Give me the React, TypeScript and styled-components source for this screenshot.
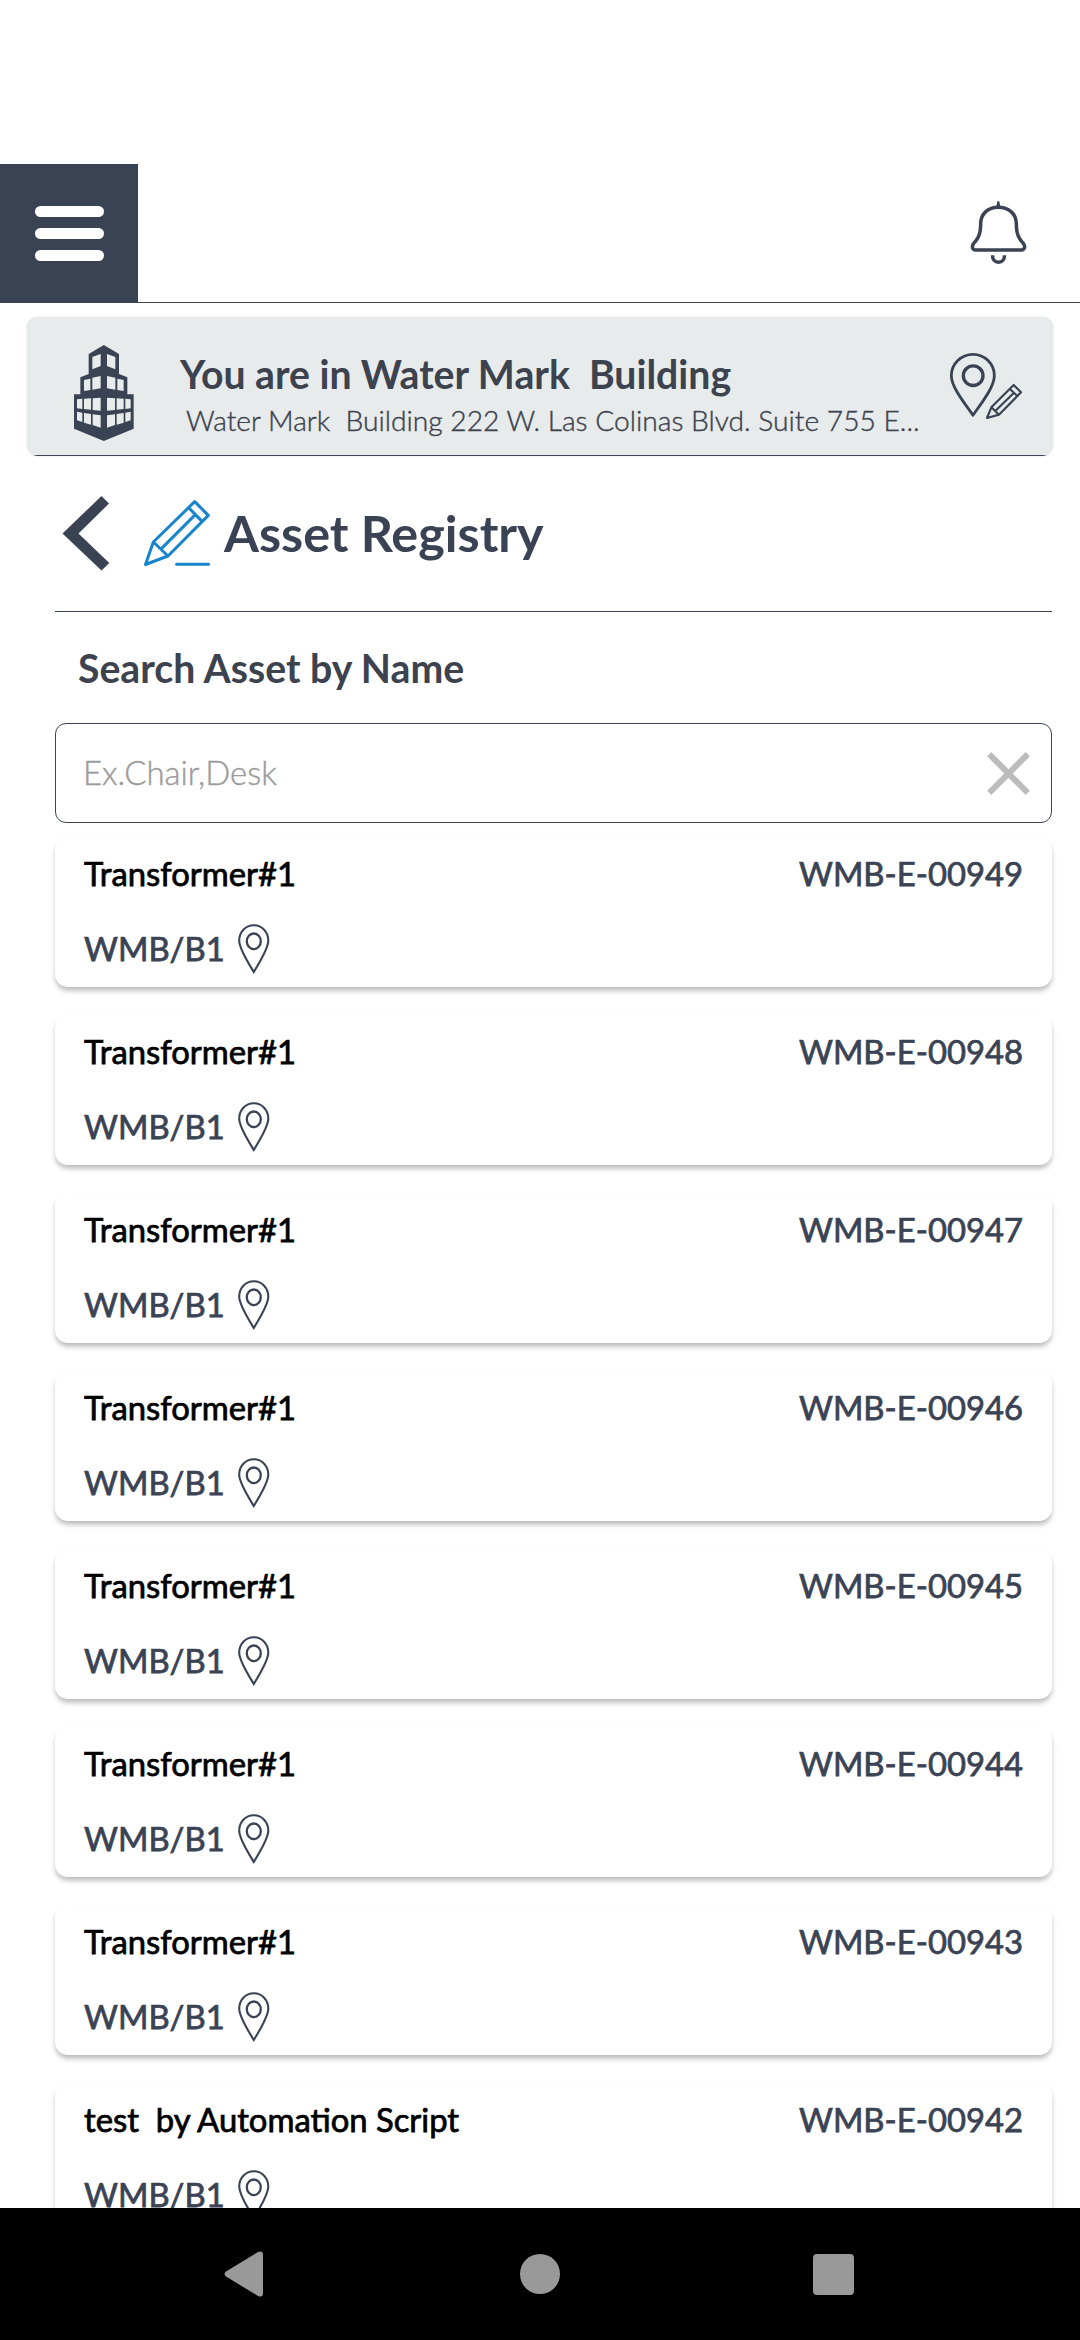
import React from "react";
import styled, { createGlobalStyle } from "styled-components";

const ink = "#3a4354";
const charcoal = "#3c424e";

const GlobalStyle = createGlobalStyle`
  *, *::before, *::after { box-sizing: border-box; }
  body { margin: 0; background: #fff; font-family: Lato, "Open Sans", sans-serif; }
  button { border: 0; padding: 0; background: none; font: inherit; color: inherit; display: flex; }
  svg { display: block; flex: none; overflow: visible; }
`;

const Screen = styled.div`
  width: 1080px;
  height: 2340px;
  display: flex;
  flex-direction: column;
  overflow: hidden;
  background: #fff;
`;

const TopBar = styled.header`
  flex: none;
  margin-top: 164px;
  height: 139px;
  border-bottom: 1px solid ${ink};
  display: flex;
  align-items: stretch;
  justify-content: space-between;
`;

const MenuButton = styled.button`
  width: 138px;
  flex-direction: column;
  align-items: center;
  justify-content: center;
  gap: 11px;
  background: ${ink};
`;

const MenuBar = styled.span`
  width: 69px;
  height: 11px;
  border-radius: 5.5px;
  background: #fff;
`;

const BellButton = styled.button`
  padding: 36px 53px 0 0;
`;

const Banner = styled.section`
  flex: none;
  margin: 14px 27px 0;
  height: 139px;
  padding-left: 46px;
  display: flex;
  border-radius: 11px;
  background: linear-gradient(${ink}, ${ink}) bottom / 100% 1px no-repeat #e7ebeb;
  box-shadow: 0 0 2px rgba(0, 0, 0, 0.16);
`;

const BannerIcon = styled.div<{ $top: number }>`
  flex: none;
  padding-top: ${(p) => p.$top}px;
`;

const BannerText = styled.div`
  flex: none;
  width: 816px;
  padding: 34px 0 0 46px;
  white-space: pre;
  color: ${charcoal};
`;

const BannerTitle = styled.h1`
  margin: 0;
  font-size: 39.2px;
  line-height: 46px;
  font-weight: 700;
`;

const BannerAddress = styled.p`
  margin: 6px 0 0 6px;
  font-size: 28.2px;
  line-height: 34px;
  font-weight: 300;
  -webkit-text-stroke: 0.4px currentColor;
`;

const Main = styled.main`
  flex: 1;
  min-height: 0;
  padding: 0 28px 0 55px;
  display: flex;
  flex-direction: column;
  overflow: hidden;
`;

const PageHeader = styled.div`
  flex: none;
  height: 156px;
  padding: 0 0 0 7px;
  border-bottom: 1px solid ${ink};
  display: flex;
  align-items: flex-start;
`;

const BackButton = styled.button`
  padding-top: 40px;
  width: 82px;
`;

const PencilSlot = styled.div`
  padding-top: 44px;
  width: 80px;
`;

const PageTitle = styled.h2`
  margin: 0;
  padding-top: 47px;
  font-size: 50.3px;
  line-height: 60px;
  font-weight: 700;
  color: ${ink};
`;

const SearchLabel = styled.label`
  flex: none;
  margin: 33px 0 0 23px;
  height: 78px;
  font-size: 39.2px;
  line-height: 46px;
  font-weight: 700;
  color: ${charcoal};
`;

const SearchBox = styled.div`
  flex: none;
  height: 100px;
  padding: 0 21px 0 27px;
  display: flex;
  align-items: center;
  justify-content: space-between;
  border: 1px solid ${ink};
  border-radius: 11px;
`;

const SearchInput = styled.input`
  flex: 1;
  min-width: 0;
  padding: 0;
  border: 0;
  outline: 0;
  background: none;
  font: 300 32.9px/40px Lato, sans-serif;
  &::placeholder { color: #9b9b9b; opacity: 1; -webkit-text-stroke: 0.4px #9b9b9b; }
`;

const List = styled.ul`
  flex: none;
  margin: 14px 0 0;
  padding: 0;
  list-style: none;
  display: flex;
  flex-direction: column;
  gap: 28px;
`;

const Card = styled.li`
  height: 150px;
  padding: 17px 29px 0;
  border-radius: 13px;
  background: #fff;
  box-shadow: 0 4px 5px -1px rgba(0, 0, 0, 0.2), 0 4px 6px rgba(0, 0, 0, 0.1);
  font-size: 32.8px;
  font-weight: 400;
  font-variant-ligatures: common-ligatures;
  -webkit-text-stroke: 0.75px currentColor;
`;

const CardTop = styled.div`
  display: flex;
  justify-content: space-between;
  line-height: 40px;
  white-space: pre;
`;

const AssetName = styled.span`
  color: #000;
`;

const AssetCode = styled.span`
  color: ${ink};
`;

const CardPlace = styled.div`
  margin-top: 29px;
  height: 50px;
  display: flex;
  gap: 13px;
  line-height: 52px;
  color: ${ink};

  svg {
    margin-top: 1px;
  }
`;

const NavBar = styled.nav`
  flex: none;
  height: 132px;
  display: flex;
  align-items: center;
  justify-content: space-between;
  padding: 0 226.5px 0 224px;
  background: #000;
`;

const HomeDot = styled.span`
  width: 40px;
  height: 40px;
  border-radius: 50%;
  background: #999;
`;

const RecentsSquare = styled.span`
  width: 41px;
  height: 41px;
  border-radius: 4px;
  background: #999;
`;

const BellIcon = () => (
  <svg width="57" height="65" viewBox="87 60 171 195" fill="none" stroke={ink} strokeWidth="10.500">
    <path d="M119 132C119 100 142 82 172 82S226 100 226 132C226 166 236 178 247 190C254 199 251 210 241 210H104C94 210 91 199 98 190C109 178 119 166 119 132Z" />
    <path d="M169 63.500H175L178 80H166Z" fill={ink} stroke="none" />
    <path d="M154.500 226C154.500 239 162 247 172.500 247S190.500 239 190.500 226" />
  </svg>
);

const mirror = (points: number[][]) => points.map(([x, y]) => [263 - x, y]);
const polygon = (points: number[][]) => "M" + points.map((p) => p.join(" ")).join("L") + "Z";

const leftWindows = [
  [[97, 66], [122, 57], [122, 93], [97, 103]],
  [[97, 128], [122, 123], [122, 160], [97, 164]],
  [[72, 135], [91, 131], [91, 165], [72, 168]],
  [[51, 193], [67, 191], [67, 222], [51, 220]],
  [[72, 191], [93, 190], [93, 224], [72, 222]],
  [[98, 190], [122, 188], [122, 227], [98, 225]],
  [[51, 230], [67, 233], [67, 261], [51, 256]],
  [[72, 234], [93, 237], [93, 269], [72, 263]],
  [[98, 238], [122, 241], [122, 278], [98, 270]],
];

const towerOutline = [
  [131.5, 30], [177, 57], [177, 117], [202, 127], [202, 178], [221, 178], [221, 281],
  [131.5, 318], [42, 281], [42, 178], [61, 178], [61, 127], [86, 117], [86, 57],
];

const BuildingIcon = () => (
  <svg width="61" height="98" viewBox="39 27 183 294" fill={ink}>
    <path
      fillRule="evenodd"
      d={[towerOutline, ...leftWindows, ...leftWindows.map(mirror)].map(polygon).join("")}
    />
  </svg>
);

const PinEditIcon = () => (
  <svg width="72" height="67" viewBox="30 518 216 201" fill="none" stroke={ink} strokeLinejoin="round">
    <path strokeWidth="8.500" d="M99 522C134 522 163 550 163 586C163 622 118 676 99 705C80 676 34 622 34 586C34 550 64 522 99 522Z" />
    <circle cx="99.500" cy="586" r="29.500" strokeWidth="10" />
    <path strokeWidth="6.500" d="M141 713L154 681L221 614L243 636L177 703ZM154 681L177 703M165 693L222 637M209 625L233 648" />
  </svg>
);

const BackIcon = () => (
  <svg width="47" height="75" viewBox="0 0 47 75" fill={ink}>
    <path d="M0.500 37.500L39.500 0L47 7.500L16.500 37.500L47.300 67L39.500 74.500Z" />
  </svg>
);

const PencilIcon = () => (
  <svg width="66" height="66" viewBox="312 90 198 198" fill="none" stroke="#1784cc" strokeWidth="9" strokeLinejoin="round">
    <path d="M316.500 283.500L340 216L464 95L505 136L384 258ZM340 216L384 258M362 238L466 134M446 113L486 154" />
    <path d="M410 283H505.500" strokeLinecap="round" />
  </svg>
);

const ClearIcon = () => (
  <svg width="43" height="43" viewBox="0 0 43 43" stroke="#bdbcbc" strokeWidth="6">
    <path d="M2.200 2.200L40.800 40.800M40.800 2.200L2.200 40.800" />
  </svg>
);

const PinIcon = () => (
  <svg width="32" height="50" viewBox="0 0 32 50" fill="none" stroke={ink} strokeWidth="2.100">
    <path d="M15.800 1.200C24 1.200 30.300 8 30.300 16.500C30.300 25 20.500 40 15.800 48C11 40 1.200 25 1.200 16.500C1.200 8 7.500 1.200 15.800 1.200Z" />
    <ellipse cx="15.800" cy="17.300" rx="7" ry="7.800" strokeWidth="2.300" />
  </svg>
);

const NavBackIcon = () => (
  <svg width="44" height="46" viewBox="0 0 44 46" fill="#999">
    <path d="M2 20.500L34 1Q39 -1 39 4V42Q39 47 34 45L2 25.500Q-1 23 2 20.500Z" />
  </svg>
);

const assets = [
  ...[949, 948, 947, 946, 945, 944, 943].map((n) => ({ name: "Transformer#1", code: `WMB-E-00${n}` })),
  { name: "test  by Automation Script", code: "WMB-E-00942" },
];

export default function App() {
  return (
    <Screen>
      <GlobalStyle />
      <TopBar>
        <MenuButton aria-label="Menu">
          <MenuBar />
          <MenuBar />
          <MenuBar />
        </MenuButton>
        <BellButton aria-label="Notifications">
          <BellIcon />
        </BellButton>
      </TopBar>
      <Banner>
        <BannerIcon $top={27}>
          <BuildingIcon />
        </BannerIcon>
        <BannerText>
          <BannerTitle>{"You are in Water Mark  Building"}</BannerTitle>
          <BannerAddress>{"Water Mark  Building 222 W. Las Colinas Blvd. Suite 755 E..."}</BannerAddress>
        </BannerText>
        <BannerIcon $top={36}>
          <PinEditIcon />
        </BannerIcon>
      </Banner>
      <Main>
        <PageHeader>
          <BackButton aria-label="Back">
            <BackIcon />
          </BackButton>
          <PencilSlot>
            <PencilIcon />
          </PencilSlot>
          <PageTitle>Asset Registry</PageTitle>
        </PageHeader>
        <SearchLabel htmlFor="asset-search">Search Asset by Name</SearchLabel>
        <SearchBox>
          <SearchInput id="asset-search" placeholder="Ex.Chair,Desk" />
          <button aria-label="Clear">
            <ClearIcon />
          </button>
        </SearchBox>
        <List>
          {assets.map((a) => (
            <Card key={a.code}>
              <CardTop>
                <AssetName>{a.name}</AssetName>
                <AssetCode>{a.code}</AssetCode>
              </CardTop>
              <CardPlace>
                WMB/B1
                <PinIcon />
              </CardPlace>
            </Card>
          ))}
        </List>
      </Main>
      <NavBar>
        <NavBackIcon />
        <HomeDot />
        <RecentsSquare />
      </NavBar>
    </Screen>
  );
}
